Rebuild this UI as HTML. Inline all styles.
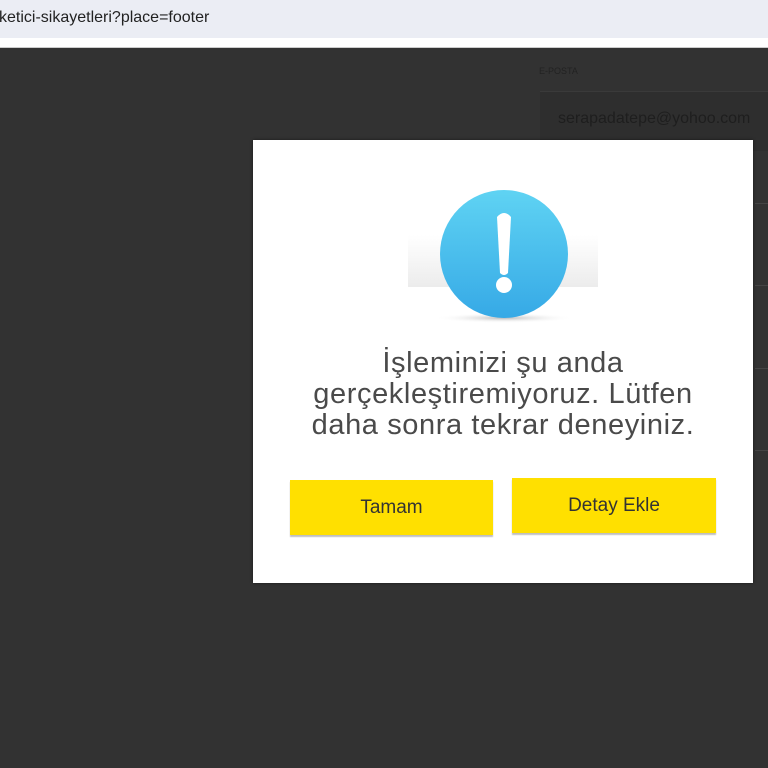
<!DOCTYPE html>
<html><head><meta charset="utf-8"><style>
*{margin:0;padding:0;box-sizing:border-box}
html,body{width:768px;height:768px;overflow:hidden;background:#323232;font-family:"Liberation Sans",sans-serif}
.bar{position:absolute;left:0;top:0;width:768px;height:38px;background:#ebedf4;}
.url{position:absolute;left:-1px;top:9px;font-size:16px;color:#222;}
.strip{position:absolute;left:0;top:38px;width:768px;height:10px;background:#fff;border-bottom:1px solid #ccc}
.lbl{position:absolute;left:539px;top:66px;font-size:9px;color:#222}
.field{position:absolute;left:540px;top:91px;width:240px;height:60px;background:#2e2e2e;border-top:1px solid #3a3a3a}
.ftxt{position:absolute;left:558px;top:110px;font-size:16px;color:#1e1e1e}
.line{position:absolute;left:755px;width:13px;height:1px;background:#444}
.dlg{position:absolute;left:253px;top:140px;width:500px;height:443px;background:#fff;box-shadow:0 0 3px rgba(0,0,0,.5)}
.msg{position:absolute;left:0;top:208px;width:500px;text-align:center;font-size:29px;line-height:31px;color:#4a4a4a;letter-spacing:0.6px}
.btn{position:absolute;height:55px;background:#ffe000;box-shadow:0 2px 1px rgba(0,0,0,.25);font-size:19px;color:#333;text-align:center;line-height:55px}
</style></head><body>
<div class="bar"><div class="url">ketici-sikayetleri?place=footer</div></div>
<div class="strip"></div>
<div class="lbl">E-POSTA</div>
<div class="field"></div>
<div class="ftxt">serapadatepe@yohoo.com</div>
<div class="line" style="top:203px"></div>
<div class="line" style="top:285px"></div>
<div class="line" style="top:368px"></div>
<div class="line" style="top:450px"></div>
<div class="dlg">
<svg style="position:absolute;left:150px;top:45px" width="200" height="145" viewBox="0 0 200 145">
<defs>
<linearGradient id="g" x1="0" y1="0" x2="0" y2="1"><stop offset="0" stop-color="#5fd3f3"/><stop offset="1" stop-color="#36a9e6"/></linearGradient>
<linearGradient id="s" x1="0" y1="0" x2="0" y2="1"><stop offset="0" stop-color="#fff"/><stop offset="1" stop-color="#ececec"/></linearGradient>
<radialGradient id="sh" cx=".5" cy=".5" r=".5"><stop offset="0" stop-color="#bbb"/><stop offset="1" stop-color="#fff" stop-opacity="0"/></radialGradient>
</defs>
<rect x="5" y="50" width="190" height="52" fill="url(#s)"/>
<ellipse cx="101" cy="133" rx="70" ry="5" fill="url(#sh)"/>
<circle cx="101" cy="69" r="64" fill="url(#g)"/>
<path d="M94 32 Q101 24 108 32 L105 88 Q101 92 97 88 Z" fill="#fff"/>
<circle cx="101" cy="100" r="8" fill="#fff"/>
</svg>
<div class="msg">İşleminizi şu anda<br>gerçekleştiremiyoruz. Lütfen<br>daha sonra tekrar deneyiniz.</div>
<div class="btn" style="left:37px;top:340px;width:203px">Tamam</div>
<div class="btn" style="left:259px;top:338px;width:204px">Detay Ekle</div>
</div>
</body></html>
